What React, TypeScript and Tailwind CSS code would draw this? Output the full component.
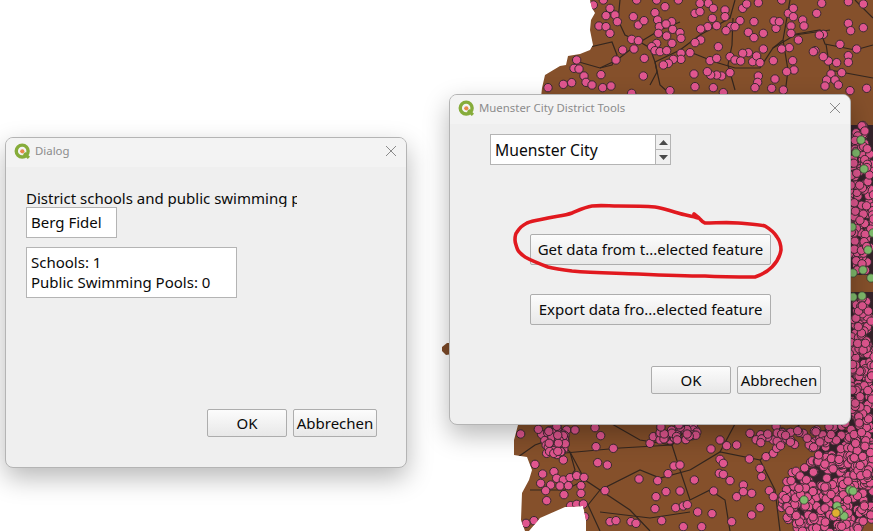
import type { ReactNode } from "react";

// hand-read marker positions from the reference, in 3x crop coordinates
const topPins = [
  [280, 15], [330, 25], [318, 47], [345, 45], [352, 65], [297, 78], [318, 80], [330, 100], [400, 50], [415, 75], [432, 62], [465, 38], [473, 60], [495, 20], [478, 80], [515, 65], [498, 72], [518, 88], [475, 100], [500, 108], [540, 98], [543, 115], [395, 118], [415, 122], [368, 150], [402, 147], [348, 180], [433, 175], [516, 130], [470, 130], [455, 140], [465, 152], [480, 155], [500, 152], [543, 160], [570, 158], [543, 178], [520, 178], [505, 190], [490, 195], [430, 228], [303, 224], [230, 180], [222, 205], [237, 207], [252, 228], [190, 253], [215, 248], [258, 247], [276, 255], [144, 263], [308, 263], [333, 258], [585, 40], [600, 35], [637, 55], [625, 10], [640, 25], [675, 30], [675, 50], [728, 25], [740, 12], [720, 62], [762, 65], [692, 80], [705, 80], [650, 77], [623, 80], [602, 87], [678, 92], [745, 97], [762, 113], [790, 100], [828, 85], [822, 63], [838, 65], [873, 78], [873, 100], [895, 120], [908, 60], [912, 78], [865, 40], [880, 50], [950, 40], [965, 10], [970, 103], [958, 105], [1045, 70], [1052, 92], [1090, 83], [1020, 133], [1070, 147], [1045, 167], [1045, 187], [1010, 188], [985, 183], [970, 170], [945, 152], [868, 143], [845, 147], [790, 147], [745, 158], [728, 160], [690, 170], [705, 180], [722, 183], [758, 185], [770, 168], [780, 188], [820, 182], [878, 182], [882, 210], [860, 215], [825, 237], [775, 228], [773, 247], [765, 263], [690, 218], [665, 228], [650, 225], [632, 225], [622, 215], [582, 222], [585, 260], [640, 263], [655, 140], [630, 182], [650, 175], [602, 120], [585, 128], [993, 222], [1025, 218], [980, 240], [975, 258], [1005, 240], [1015, 255], [1050, 272], [1100, 265], [850, 270], [670, 278], [510, 272], [395, 280], [815, 265], [1090, 12], [1045, 5], [880, 25], [845, 0], [775, 8], [600, 10], [535, 0], [470, 0], [410, 0], [310, 0], [940, 155],
];

const bottomPins = [
  [272, 312], [335, 313], [325, 298], [350, 370], [400, 390], [410, 300], [435, 300], [495, 293], [512, 317], [498, 350], [550, 355], [503, 398], [532, 405], [315, 403], [338, 432], [372, 425], [380, 445], [400, 450], [420, 443], [440, 437], [462, 442], [332, 460], [362, 465], [390, 468], [415, 467], [453, 467], [347, 482], [402, 494], [453, 490], [350, 512], [422, 527], [440, 523], [460, 522], [464, 560], [525, 482], [627, 447], [683, 452], [714, 431], [732, 408], [750, 405], [793, 450], [678, 500], [708, 485], [750, 483], [851, 483], [675, 536], [737, 533], [760, 528], [772, 524], [803, 546], [846, 551], [540, 575], [558, 572], [603, 575], [618, 580], [695, 572], [312, 572], [288, 580], [660, 340], [670, 320], [690, 315], [720, 330], [740, 325], [760, 297], [790, 315], [843, 357], [870, 330], [890, 347], [958, 387], [1008, 380], [1030, 370], [1040, 355], [870, 388], [880, 400], [868, 430], [880, 433], [900, 452], [940, 465], [920, 500], [940, 485], [965, 490], [990, 415], [995, 440], [1018, 482], [1030, 500], [990, 533], [965, 555], [905, 575], [760, 590], [815, 590], [1090, 340], [1120, 310], [1160, 300], [1200, 297], [1283, 380], [920, 345], [960, 310], [1030, 330], [1060, 310],
];

const clusters = [
  { cx: 830, cy: 498, rx: 50, ry: 40, n: 260 },
  { cx: 835, cy: 445, rx: 26, ry: 24, n: 80 },
  { cx: 862, cy: 450, rx: 13, ry: 32, n: 80 },
  { cx: 862, cy: 200, rx: 13, ry: 76, n: 170 },
  { cx: 862, cy: 365, rx: 13, ry: 70, n: 170 },
  { cx: 555, cy: 440, rx: 11, ry: 15, n: 44 },
  { cx: 684, cy: 432, rx: 13, ry: 10, n: 30 },
  { cx: 662, cy: 434, rx: 6, ry: 8, n: 10 },
  { cx: 780, cy: 436, rx: 30, ry: 10, n: 26 },
];

let seed = 1337;
function rand() {
  seed = (seed * 16807) % 2147483647;
  return seed / 2147483647;
}

const clusterPins = clusters.flatMap((c) =>
  Array.from({ length: c.n }, () => {
    const a = rand() * Math.PI * 2;
    const r = Math.sqrt(rand());
    return [c.cx + Math.cos(a) * r * c.rx, c.cy + Math.sin(a) * r * c.ry];
  }),
);

const pins = [
  ...topPins.map(([x, y]) => [500 + x / 3, y / 3]),
  ...bottomPins.map(([x, y]) => [430 + x / 3, 330 + y / 3]),
  ...clusterPins,
];

const greenPins = [
  [861, 140], [856, 153], [864, 169], [852, 227], [873, 233], [868, 250], [863, 270], [853, 273], [853, 297], [862, 296], [871, 278],
  [804, 500], [850, 490], [853, 491], [837, 506], [844, 516], [839, 511],
];

const districtLines = [
  "M590 47 L612 42 L617 55 L612 65 L600 68 L572 60",
  "M620 0 L618 20 L625 35 L640 42 L650 48 L655 62 L657 72 L650 85",
  "M655 62 L680 50 L700 35 L730 18 L735 0",
  "M640 42 L660 30 L680 22",
  "M600 68 L617 60 L640 42",
  "M690 52 L715 62 L735 68 L760 68 L773 48 L795 35 L830 30",
  "M733 18 L732 45 L728 65 L735 90",
  "M773 48 L783 40 L790 0",
  "M790 35 L820 30 L825 44 L855 50 L873 45",
  "M826 44 L830 70 L873 78",
  "M783 40 L788 70 L785 94",
  "M873 18 L855 0",
  "M655 62 L660 85 L670 94",
  "M518 457 L535 445 L555 438 L570 452 L575 470 L560 490",
  "M565 453 L620 448 L672 445",
  "M570 452 L585 480 L600 490 L640 470 L660 478 L690 470",
  "M585 480 L565 490 L530 490",
  "M600 490 L630 510 L650 531",
  "M600 490 L588 505 L600 531",
  "M672 445 L680 470 L690 500 L710 490 L725 500 L730 531",
  "M690 470 L720 452 L760 460 L775 490 L780 531",
  "M612 424 L640 440 L672 445 L690 425",
  "M600 512 L650 518 L690 512",
  "M720 452 L735 424",
  "M760 460 L785 440 L800 424",
];

const selectionStroke =
  "M515 240 C515 236 516 233 517 232 C520 227 523 225 527 223 C534 220 541 220 548 218 C556 216 564 216 572 213 C579 210 585 207 592 206 C601 205 609 206 618 206 C630 206 643 206 655 207 C663 208 670 211 678 213 C684 215 692 216 698 218 L694 214 L699 218 C701 220 702 222 705 223 C716 223 727 222 738 223 C747 224 757 224 765 226 C770 229 774 232 777 237 C780 241 781 245 781 250 C780 256 777 262 772 267 C767 272 761 275 755 277 C738 277 722 277 705 276 C683 276 660 275 638 274 C616 273 594 273 572 271 C564 270 556 269 548 267 C540 264 532 261 525 257 C521 254 518 252 517 248 C516 245 515 243 515 240 Z";

function MapLayer() {
  return (
    <svg className="absolute inset-0" width="873" height="531" viewBox="0 0 873 531">
      <defs>
        <clipPath id="land">
          <path d="M590 0 L592 8 L595 13 L591 20 L590 30 L593 45 L590 50 L580 54 L568 56 L566 65 L560 66 L545 75 L542 88 L530 200 L518 425 L514 440 L514 455 L527 457 L532 470 L529 480 L522 493 L521 520 L525 531 L529 531 L540 518 L565 507 L583 506 L586 520 L586 531 L873 531 L873 0 Z" />
        </clipPath>
      </defs>
      <path d="M442 347 L447 343 L452 343 L452 354 L446 355 L442 351 Z" fill="#7d4a28" />
      <g clipPath="url(#land)">
        <rect x="500" y="0" width="373" height="531" fill="#85502b" />
        <ellipse cx="830" cy="498" rx="44" ry="34" fill="#35232a" />
        <ellipse cx="835" cy="445" rx="20" ry="18" fill="#35232a" />
        <rect x="850" y="125" width="23" height="150" fill="#35232a" />
        <rect x="850" y="292" width="23" height="160" fill="#35232a" />
        <ellipse cx="555" cy="440" rx="9" ry="12" fill="#35232a" />
        <g fill="none" stroke="#33261f" strokeWidth="1.2">
          {districtLines.map((d) => (
            <path key={d} d={d} />
          ))}
        </g>
        <g fill="#e0568f" stroke="#3a2a30" strokeWidth="1">
          {pins.map(([x, y], i) => (
            <circle key={i} cx={x} cy={y} r="4.2" />
          ))}
        </g>
        <g fill="#7fbb6c" stroke="#3a3a30" strokeWidth="0.8">
          {greenPins.map(([x, y], i) => (
            <circle key={i} cx={x} cy={y} r="4.2" />
          ))}
        </g>
        <circle cx="836" cy="513" r="4.2" fill="#e0b030" stroke="#3a3a30" strokeWidth="0.8" />
      </g>
    </svg>
  );
}

function QgisIcon() {
  return (
    <svg width="17" height="17" viewBox="0 0 16 16" className="shrink-0">
      <circle cx="7.7" cy="7.6" r="5.6" fill="none" stroke="#86ac3a" strokeWidth="3.2" />
      <path d="M9.5 9.5 L14 14" stroke="#86ac3a" strokeWidth="3" />
      <circle cx="7.8" cy="7.8" r="2" fill="#e8884a" />
    </svg>
  );
}

function Dialog({ title, className, children }: { title: string; className: string; children: ReactNode }) {
  return (
    <div className={`absolute flex h-[331px] w-[402px] flex-col overflow-hidden rounded-lg border border-[#b4b4b4] bg-[#efefef] text-[15px] leading-[20px] text-[#0a0a0a] shadow-[0_10px_26px_rgba(0,0,0,0.28)] ${className}`}>
      <div className="flex h-[29px] shrink-0 items-center bg-[#f3f3f3] pb-[3px] pl-[3px] pr-[8px]">
        <div className="ml-[5px] flex">
          <QgisIcon />
        </div>
        <span className="ml-[4px] text-[11.4px] text-[#8c8c8c]">{title}</span>
        <svg width="12" height="12" viewBox="0 0 12 12" className="ml-auto mr-[1px]">
          <path d="M1 1 L11 11 M11 1 L1 11" stroke="#8a8a8a" strokeWidth="1" />
        </svg>
      </div>
      {children}
    </div>
  );
}

function PushButton({ children, className }: { children: ReactNode; className: string }) {
  return (
    <button
      type="button"
      className={`flex items-center justify-center whitespace-nowrap rounded-[2px] border border-[#adadad] bg-gradient-to-b from-[#fcfcfc] to-[#e8e8e8] pb-px ${className}`}
    >
      {children}
    </button>
  );
}

function DialogActions({ className }: { className: string }) {
  return (
    <div className={`flex gap-[6px] ${className}`}>
      <PushButton className="h-[28px] w-[80px]">OK</PushButton>
      <PushButton className="h-[28px] w-[84px]">Abbrechen</PushButton>
    </div>
  );
}

export default function App() {
  return (
    <div className="relative h-[531px] w-[873px] overflow-hidden bg-white font-['Noto_Sans',sans-serif]">
      <MapLayer />

      <Dialog title="Dialog" className="left-[5px] top-[137px]">
        <div className="flex flex-1 flex-col pl-[20px]">
          <div className="mt-[21px] h-[19px] w-[271px] overflow-hidden whitespace-nowrap">
            District schools and public swimming pools
          </div>
          <div className="flex h-[31px] w-[91px] items-center border border-[#b4b4b4] bg-white pb-[2px] pl-[4px]">
            Berg Fidel
          </div>
          <div className="mt-[9px] flex h-[51px] w-[211px] flex-col justify-center border border-[#b4b4b4] bg-white pb-[2px] pl-[4px]">
            <span>Schools: 1</span>
            <span>Public Swimming Pools: 0</span>
          </div>
          <DialogActions className="mt-[111px] ml-[181px]" />
        </div>
      </Dialog>

      <Dialog title="Muenster City District Tools" className="left-[449px] top-[94px]">
        <div className="flex flex-1 flex-col">
          <div className="ml-[40px] mt-[10px] flex h-[31px] w-[181px] border border-[#b4b4b4] bg-white">
            <div className="flex flex-1 items-center pl-[4px] text-[15.7px]">Muenster City</div>
            <div className="flex w-[15px] flex-col border-l border-[#b4b4b4] bg-[#f0f0f0]">
              <div className="flex flex-1 items-center justify-center border-b border-[#b4b4b4]">
                <svg width="9" height="5" viewBox="0 0 9 5">
                  <path d="M4.5 0 L9 5 L0 5 Z" fill="#4a4a4a" />
                </svg>
              </div>
              <div className="flex flex-1 items-center justify-center">
                <svg width="9" height="5" viewBox="0 0 9 5">
                  <path d="M0 0 L9 0 L4.5 5 Z" fill="#4a4a4a" />
                </svg>
              </div>
            </div>
          </div>
          <PushButton className="ml-[80px] mt-[69px] h-[31px] w-[241px]">Get data from t...elected feature</PushButton>
          <PushButton className="ml-[80px] mt-[29px] h-[31px] w-[241px]">Export data fro...elected feature</PushButton>
          <DialogActions className="ml-[201px] mt-[41px]" />
        </div>
      </Dialog>

      <svg className="pointer-events-none absolute inset-0" width="873" height="531" viewBox="0 0 873 531">
        <path d={selectionStroke} fill="none" stroke="#e1191f" strokeWidth="3.6" strokeLinejoin="round" />
      </svg>
    </div>
  );
}
